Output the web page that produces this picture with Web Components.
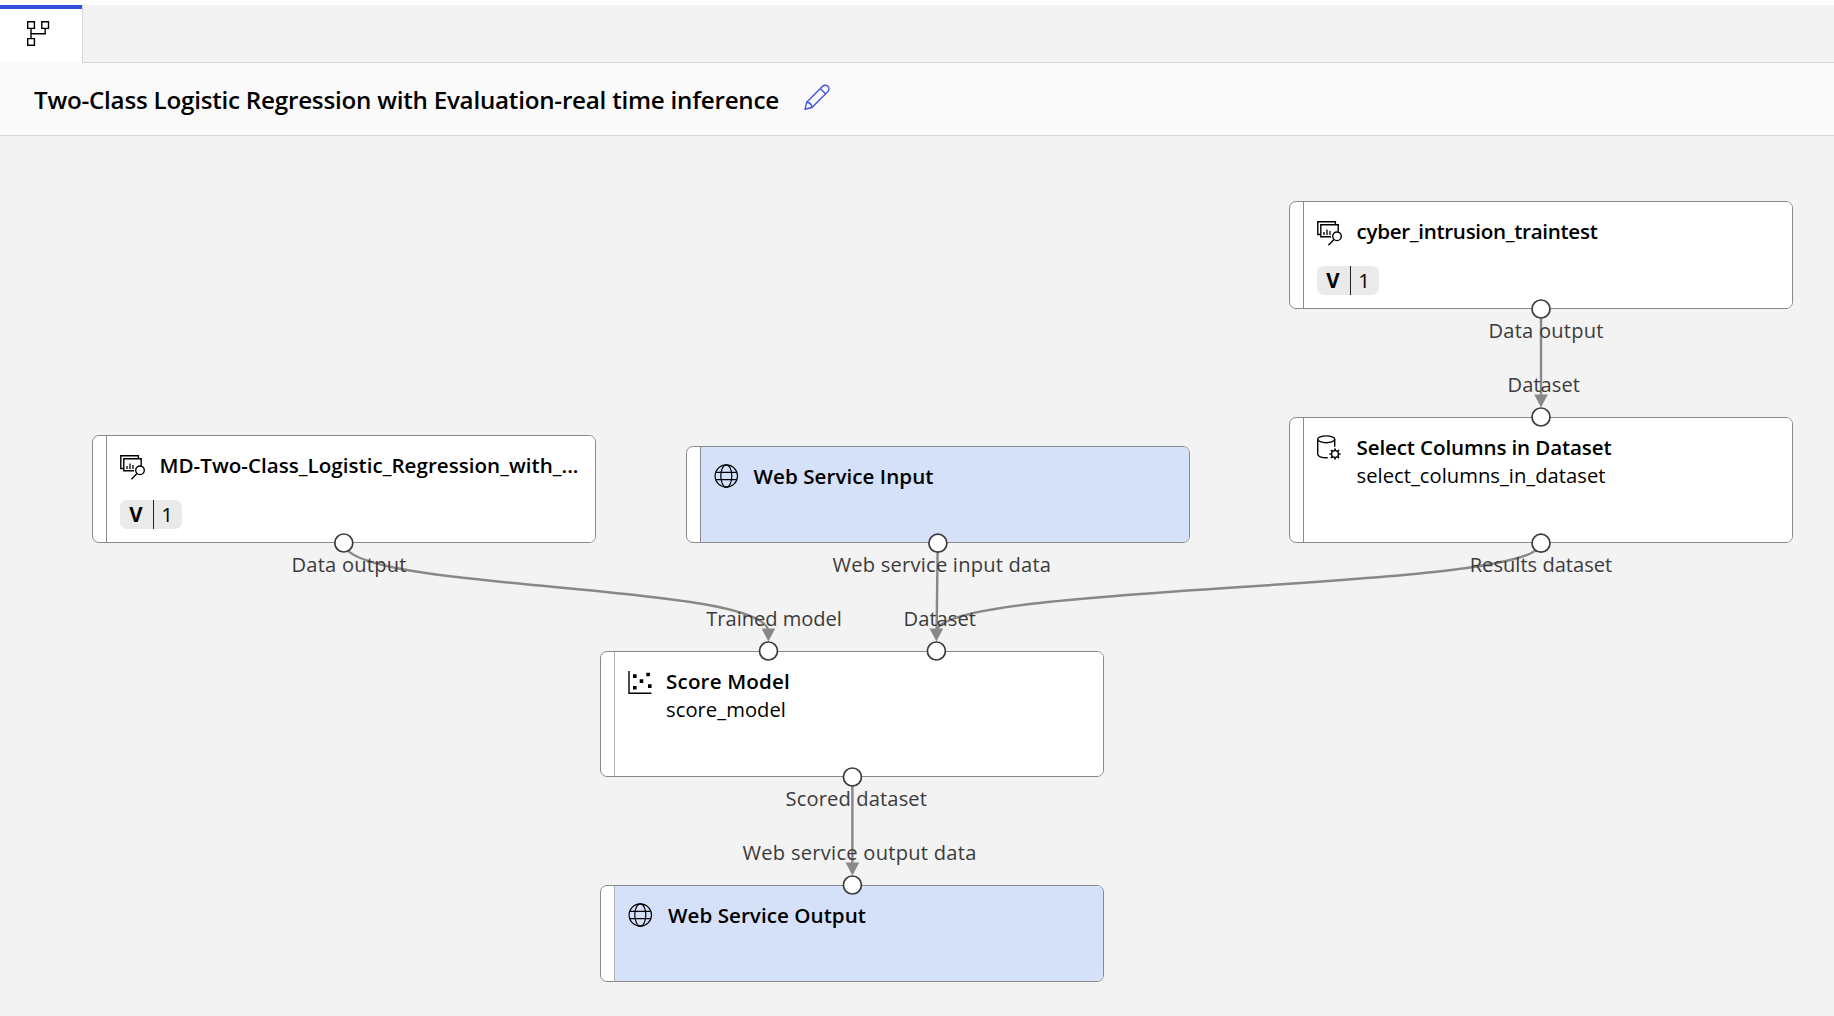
<!DOCTYPE html>
<html lang="en">
<head>
<meta charset="utf-8">
<title>Pipeline designer</title>
<style>
html,body{margin:0;height:100%;overflow:hidden;background:#f3f3f3}
body{font-family:"Open Sans","Noto Sans",sans-serif;color:#000}
</style>
</head>
<body>
<designer-app></designer-app>
<script>
const ICONS = {
  dataset: `<svg width="26" height="26" viewBox="0 0 26 26" fill="none" stroke="#000" stroke-width="1.4"><path d="M3.8 13.5H.8V.8h17.6v3"/><path d="M14 15.7H3.8V3.8h17.4v7"/><path d="M7 14v-3M10 14V8.500M13 14v-4" stroke-width="1.300"/><circle cx="20" cy="15.300" r="4.300"/><path d="M17 18.500l-5.600 5.700"/></svg>`,
  columns: `<svg width="26" height="26" viewBox="0 0 26 26" fill="none" stroke="#000" stroke-width="1.4"><ellipse cx="9.200" cy="4.300" rx="8.500" ry="3.400"/><path d="M.7 4.300v15c0 2 4 3.500 8.500 3.500h1.500M17.700 4.300v7.500"/><circle cx="18" cy="19" r="3.400"/><path d="M18 15.600v-2.200M18 24.600v-2.200M21.400 19h2.200M12.400 19h2.200M20.400 16.600l1.600-1.600M14 23l1.600-1.600M20.400 21.400l1.600 1.600M14 15l1.600 1.600" stroke-width="1.700"/></svg>`,
  globe: `<svg width="25" height="25" viewBox="0 0 25 25" fill="none" stroke="#000" stroke-width="1.200"><circle cx="12.300" cy="12" r="11.200"/><ellipse cx="12.300" cy="12" rx="5.500" ry="11.200"/><path d="M1.800 8.400h21M1.800 15.600h21"/></svg>`,
  scatter: `<svg width="25" height="25" viewBox="0 0 25 25"><path d="M1 0v22.300h22.500" fill="none" stroke="#000" stroke-width="1.400"/><path d="M5 3.300h3.600v3.600H5zM18.300 1.700h3.600v3.600h-3.600zM11.700 8.300h3.600v3.600h-3.600zM5 15h3.600v3.600H5zM20 13.300h3.600v3.600H20z"/></svg>`
};
function define(name, html, ready) {
  const t = document.createElement('template');
  t.innerHTML = html;
  customElements.define(name, class extends HTMLElement {
    connectedCallback() {
      if (this.shadowRoot) return;
      this.attachShadow({mode:'open'}).append(t.content.cloneNode(true));
      if (ready) ready(this, this.shadowRoot);
    }
  });
}

/* Single line of text tracked so that it fills a given width. */
define('fit-text', `<style>:host{display:inline-block;white-space:nowrap;line-height:28px}span{display:inline-block}</style><span><slot></slot></span>`, (el, root) => {
  const s = root.querySelector('span'), w = +el.getAttribute('w');
  const n = el.textContent.length;
  const d = (w - s.getBoundingClientRect().width) / n;
  s.style.letterSpacing = d.toFixed(3) + 'px';
});

define('tab-strip', `<style>
:host{display:flex;height:58px;background:#f3f3f3;border-top:5px solid #fff;box-sizing:content-box}
.tab{width:82px;box-sizing:border-box;border-top:4px solid #364ede;background:#fff;display:flex;padding:12px 0 0 27px}
.rest{flex:1;border-left:1px solid #d6d6d6;border-bottom:1px solid #d6d6d6}
</style><div class="tab"><svg width="23" height="26" viewBox="0 0 23 26" fill="none" stroke="#000" stroke-width="1.400"><path d="M.7.700h6.700v6.700H.7zM14.800.700h6.700v6.700h-6.700zM.7 17.600h6.700v6.700H.7zM4 7.400v10.200M4 12.800h14.200V7.400"/></svg></div><div class="rest"></div>`);

define('title-bar', `<style>
:host{display:flex;align-items:flex-start;height:72px;background:#fafafa;border-bottom:1px solid #d6d6d6;padding-left:34px}
fit-text{font-size:24.200px;font-weight:600;margin-top:23px}
svg{margin:21px 0 0 25px}
</style><fit-text w="745">Two-Class Logistic Regression with Evaluation-real time inference</fit-text>
<svg width="27" height="27" viewBox="0 0 27 27" fill="none" stroke="#4254e4" stroke-width="1.400" stroke-linejoin="round"><path d="M1 25.300l1.700-7L18.600 2.300a3.700 3.700 0 0 1 5.300 5.300L8 23.500zM16.300 4.600l5.300 5.300M2.700 18.300c3.300.400 5 2.100 5.300 5.200"/></svg>`);

define('version-chip', `<style>
:host{display:inline-flex;height:29px;width:62px;border-radius:7px;background:#eaeaea;overflow:hidden;font-size:20.500px;line-height:29px}
b,span{display:flex;justify-content:center}
b{width:33px;border-right:1px solid #222;font-weight:700}
span{width:27px}
</style><b>V</b><span><slot></slot></span>`);

define('node-card', `<style>
:host{position:absolute;display:flex;box-sizing:border-box;width:504px;border:1.300px solid #8a8a8a;border-radius:7px;background:#fff;overflow:hidden}
.grip{flex:none;width:13px;border-right:1px solid var(--rule,#8a8a8a)}
.body{flex:1;position:relative;display:flex;flex-direction:column;padding-left:12.500px;background:var(--fill,#fff)}
.head{display:flex;align-items:flex-start}
.icon{display:flex;width:var(--iw,40px);padding-top:var(--it,19px);flex:none}
.txt{display:flex;flex-direction:column;padding-top:var(--tt,15px)}
.title{font-size:20.600px;font-weight:600}
.sub{font-size:20.200px;margin-top:0}
version-chip{margin-top:19px}
</style><div class="grip"></div><div class="body"><div class="head"><div class="icon"></div><div class="txt"></div></div></div>`, (el, root) => {
  const a = k => el.getAttribute(k);
  el.style.left = a('x') + 'px'; el.style.top = a('y') + 'px'; el.style.height = a('h') + 'px';
  root.querySelector('.icon').innerHTML = ICONS[a('icon')];
  root.querySelector('.txt').innerHTML = `<fit-text class="title" w="${a('w')}">${a('name')}</fit-text>` +
    (a('sub') ? `<fit-text class="sub" w="${a('sw')}">${a('sub')}</fit-text>` : '');
  if (a('version')) {
    const c = document.createElement('version-chip');
    c.textContent = a('version');
    root.querySelector('.body').append(c);
  }
});

define('port-label', `<style>:host{position:absolute;display:block;font-size:20.100px;color:#3b3b3b;height:28px}</style><fit-text></fit-text>`, (el, root) => {
  el.style.left = (el.getAttribute('x') - 1) + 'px';
  el.style.top = (el.getAttribute('base') - 21) + 'px';
  const f = document.createElement('fit-text');
  f.setAttribute('w', +el.getAttribute('w') + 1.600);
  f.textContent = el.getAttribute('text');
  root.querySelector('fit-text').replaceWith(f);
});

define('edge-layer', `<style>:host{position:absolute;left:0;top:-136px;display:block;width:1834px;height:1016px}svg{display:block}</style>
<svg width="1834" height="1016" fill="none" stroke="#8a8886" stroke-width="2.400">
<path d="M1541 309V398M1541 543C1541 592 937 582 936.500 632M937.700 543L936.600 632M343.800 543C343.800 592 768.400 582 768.400 632M852.400 777V866"/>
<g fill="#8a8886" stroke="none"><path d="M1534.200 394.500h13.600l-6.800 13zM761.600 628.600h13.600l-6.800 13zM929.600 628.600h13.600l-6.800 13zM845.600 862.500h13.600l-6.800 13z"/></g></svg>`);

define('port-layer', `<style>:host{position:absolute;left:0;top:-136px;display:block;width:1834px;height:1016px}svg{display:block}</style><svg width="1834" height="1016" fill="#fff" stroke="#3b3b3b" stroke-width="1.700"></svg>`, (el, root) => {
  root.querySelector('svg').innerHTML = [[1541,309],[1541,417],[1541,543.200],[343.800,543],[937.900,543.200],[768.500,651],[936.400,651],[852.400,777],[852.400,885]]
    .map(([x,y]) => `<circle cx="${x}" cy="${y}" r="9"/>`).join('');
});

define('pipeline-canvas', `<style>
:host{position:relative;display:block;flex:1;background:#f3f3f3;overflow:hidden}
.blue{--fill:#d5e0f9}
</style>
<node-card x="1289" y="65" h="108" icon="dataset" name="cyber_intrusion_traintest" w="241" version="1"></node-card>
<node-card style="--it:17px;--tt:15px" x="1289" y="281.200" h="126" icon="columns" name="Select Columns in Dataset" w="255" sub="select_columns_in_dataset" sw="249"></node-card>
<node-card x="92" y="299" h="108" icon="dataset" name="MD-Two-Class_Logistic_Regression_with_..." w="419" version="1"></node-card>
<node-card class="blue" style="--it:17px;--iw:40px;--tt:15px" x="686" y="310" h="97" icon="globe" name="Web Service Input" w="180"></node-card>
<node-card style="--it:19px;--tt:15px;--iw:38.500px;--rule:#b4b4b4" x="600" y="515" h="126" icon="scatter" name="Score Model" w="124" sub="score_model" sw="120"></node-card>
<node-card class="blue" style="--it:17px;--tt:15px;--iw:40.500px;--rule:#b4b4b4" x="600" y="749.200" h="97" icon="globe" name="Web Service Output" w="198"></node-card>
<edge-layer></edge-layer>
<port-label x="1489.500" base="202.300" w="113.500" text="Data output"></port-label>
<port-label x="1508.500" base="256.200" w="71" text="Dataset"></port-label>
<port-label x="1470.700" base="436" w="141" text="Results dataset"></port-label>
<port-label x="292.500" base="436" w="113.500" text="Data output"></port-label>
<port-label x="833.600" base="436" w="217" text="Web service input data"></port-label>
<port-label x="707.300" base="490" w="134" text="Trained model"></port-label>
<port-label x="904.500" base="490" w="71" text="Dataset"></port-label>
<port-label x="786.500" base="670" w="140" text="Scored dataset"></port-label>
<port-label x="743.500" base="724" w="232.500" text="Web service output data"></port-label>
<port-layer></port-layer>`);

define('designer-app', `<style>:host{display:flex;flex-direction:column;height:100vh}</style><tab-strip></tab-strip><title-bar></title-bar><pipeline-canvas></pipeline-canvas>`);
</script>
</body>
</html>
